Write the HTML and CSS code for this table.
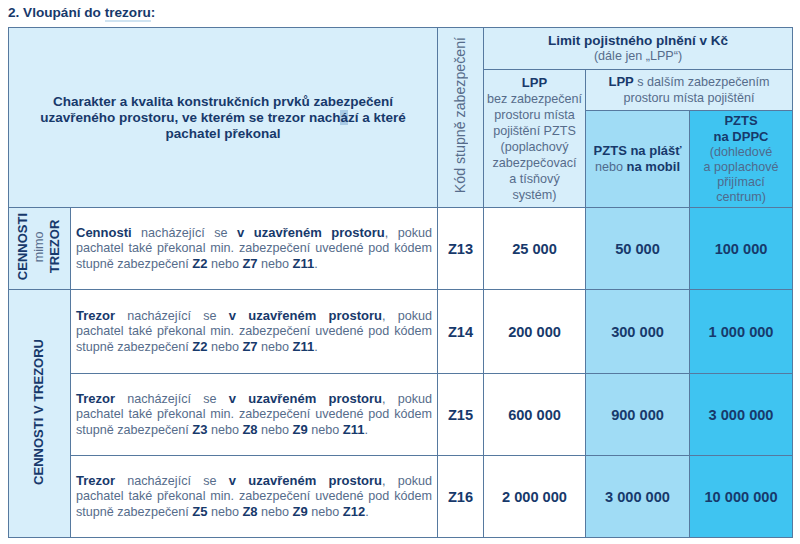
FILE: index.html
```html
<!DOCTYPE html>
<html lang="cs">
<head>
<meta charset="utf-8">
<title>Vloupání do trezoru</title>
<link rel="stylesheet" href="styles.css">
</head>
<body>
<h1 class="title">2. Vloupání do <span class="ul">trezoru</span>:</h1>
<table class="grid">
  <colgroup>
    <col class="c-a"><col class="c-b"><col class="c-c"><col class="c-d"><col class="c-e"><col class="c-f">
  </colgroup>
  <thead>
    <tr class="h1">
      <th colspan="2" rowspan="3" class="hd charakter">Charakter a kvalita konstrukčních prvků zabezpečení<br>uzavřeného prostoru, ve kterém se trezor nach<span class="hl">á</span>zí a které<br>pachatel překonal</th>
      <th rowspan="3" class="hd kod"><div class="vt">Kód stupně zabezpečení</div></th>
      <th colspan="3" class="hd limit"><b>Limit pojistného plnění v Kč</b><br><span class="r">(dále jen „LPP“)</span></th>
    </tr>
    <tr class="h2">
      <th rowspan="2" class="hd lpp"><b>LPP</b><br><span class="r">bez zabezpečení<br>prostoru místa<br>pojištění PZTS<br>(poplachový<br>zabezpečovací<br>a tísňový<br>systém)</span></th>
      <th colspan="2" class="hd further"><b>LPP</b> <span class="r">s dalším zabezpečením<br>prostoru místa pojištění</span></th>
    </tr>
    <tr class="h3">
      <th class="mid sub"><b>PZTS na plášť</b><br><span class="r">nebo</span> <b>na mobil</b></th>
      <th class="dark sub"><b>PZTS<br>na DPPC</b><br><span class="r">(dohledové<br>a poplachové<br>přijímací<br>centrum)</span></th>
    </tr>
  </thead>
  <tbody>
    <tr class="b1">
      <td class="cat"><div class="vt"><b>CENNOSTI</b><br><span class="r">mimo</span><br><b>TREZOR</b></div></td>
      <td class="desc"><span class="ln j"><b>Cennosti</b> nacházející se <b>v uzavřeném prostoru</b>, pokud</span><span class="ln j">pachatel také překonal min. zabezpečení uvedené pod kódem</span><span class="ln">stupně zabezpečení <b>Z2</b> nebo <b>Z7</b> nebo <b>Z11</b>.</span></td>
      <td class="code">Z13</td>
      <td class="num">25 000</td>
      <td class="num mid">50 000</td>
      <td class="num dark">100 000</td>
    </tr>
    <tr class="b2">
      <td class="cat" rowspan="3"><div class="vt"><b>CENNOSTI V TREZORU</b></div></td>
      <td class="desc"><span class="ln j"><b>Trezor</b> nacházející se <b>v uzavřeném prostoru</b>, pokud</span><span class="ln j">pachatel také překonal min. zabezpečení uvedené pod kódem</span><span class="ln">stupně zabezpečení <b>Z2</b> nebo <b>Z7</b> nebo <b>Z11</b>.</span></td>
      <td class="code">Z14</td>
      <td class="num">200 000</td>
      <td class="num mid">300 000</td>
      <td class="num dark">1 000 000</td>
    </tr>
    <tr class="b3">
      <td class="desc"><span class="ln j"><b>Trezor</b> nacházející se <b>v uzavřeném prostoru</b>, pokud</span><span class="ln j">pachatel také překonal min. zabezpečení uvedené pod kódem</span><span class="ln">stupně zabezpečení <b>Z3</b> nebo <b>Z8</b> nebo <b>Z9</b> nebo <b>Z11</b>.</span></td>
      <td class="code">Z15</td>
      <td class="num">600 000</td>
      <td class="num mid">900 000</td>
      <td class="num dark">3 000 000</td>
    </tr>
    <tr class="b4">
      <td class="desc"><span class="ln j"><b>Trezor</b> nacházející se <b>v uzavřeném prostoru</b>, pokud</span><span class="ln j">pachatel také překonal min. zabezpečení uvedené pod kódem</span><span class="ln">stupně zabezpečení <b>Z5</b> nebo <b>Z8</b> nebo <b>Z9</b> nebo <b>Z12</b>.</span></td>
      <td class="code">Z16</td>
      <td class="num">2 000 000</td>
      <td class="num mid">3 000 000</td>
      <td class="num dark">10 000 000</td>
    </tr>
  </tbody>
</table>
</body>
</html>
```

FILE: styles.css
```css
html, body {
  margin: 0;
  padding: 0;
  background: #ffffff;
}
body {
  padding: 5px 8px 0 8px;
  font-family: "Liberation Sans", Arial, sans-serif;
  color: #17396b;
}
.title {
  margin: 0 0 6px 0;
  font-size: 13.6px;
  line-height: 16px;
  font-weight: bold;
  color: #17396b;
}
.ul {
  border-bottom: 2px solid #cfe3f1;
}
.grid {
  border-collapse: collapse;
  table-layout: fixed;
  width: 784px;
  border: 1.5px solid #56799f;
}
.c-a { width: 62px; }
.c-b { width: 367px; }
.c-c { width: 46px; }
.c-d { width: 102px; }
.c-e { width: 104px; }
.c-f { width: 103px; }

.grid th, .grid td {
  border: 1px solid #56799f;
  padding: 0;
  text-align: center;
  vertical-align: middle;
  font-size: 12.6px;
  line-height: 15px;
  color: #17396b;
}
.grid th {
  font-weight: normal;
}
.grid b {
  font-weight: bold;
  font-size: 13px;
  color: #17396b;
}
.r {
  color: #566c8b;
  font-weight: normal;
}
.hd {
  background: #d7eefa;
}
.h1 { height: 42px; }
.h2 { height: 41px; }
.h3 { height: 97px; }
.grid th.charakter {
  font-weight: bold;
  font-size: 13.5px;
  line-height: 16px;
}
.hl {
  background: #a9cbe6;
}
.grid th.kod {
  color: #566c8b;
  font-size: 14.2px;
  line-height: 17px;
}
.grid th.limit {
  line-height: 15.5px;
}
.grid th.limit b {
  font-size: 13.5px;
}
.grid th.lpp {
  line-height: 16px;
}
.grid th.further {
  line-height: 16px;
}
.mid {
  background: #a0dcf5;
}
.dark {
  background: #3fc4f1;
}
.sub .r {
  color: #4f6a8d;
}
.vt {
  display: inline-block;
  writing-mode: vertical-rl;
  transform: rotate(180deg);
  text-align: center;
}
.cat {
  background: #d7eefa;
}
.cat .vt {
  line-height: 15.5px;
}
.b1 { height: 82px; }
.b2 { height: 84px; }
.b3 { height: 82px; }
.b4 { height: 82px; }
.grid td.desc {
  text-align: left;
  padding: 0 5px 0 5px;
  color: #566c8b;
}
.ln {
  display: block;
  white-space: nowrap;
}
.ln.j {
  text-align: justify;
  text-align-last: justify;
  white-space: normal;
}
.grid td.code, .grid td.num {
  font-weight: bold;
  font-size: 14.6px;
  line-height: 18px;
}
```
